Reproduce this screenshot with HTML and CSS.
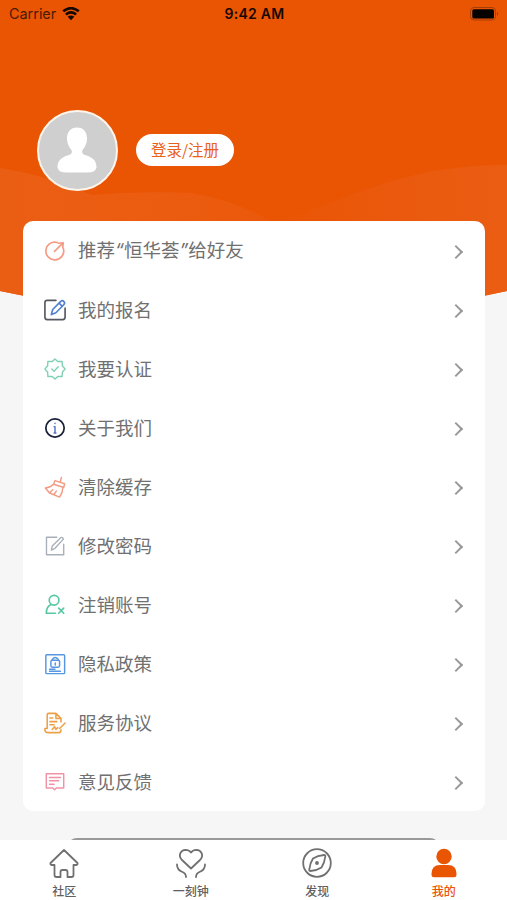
FILE: index.html
```html
<!DOCTYPE html>
<html lang="zh-CN">
<head>
<meta charset="utf-8">
<title>我的</title>
<link rel="stylesheet" href="styles.css">
</head>
<body>
<div class="app">
  <main class="page">
    <svg class="hero" viewBox="0 0 507 310" aria-hidden="true">
      <defs>
        <linearGradient id="left" x1="0" y1="0" x2="1" y2="0"><stop offset="0" stop-color="#ea5e14"/><stop offset=".6" stop-color="#ec5c10"/><stop offset="1" stop-color="#ea590b"/></linearGradient>
        <linearGradient id="right" x1="0" y1="0" x2="1" y2="0"><stop offset="0" stop-color="#ea5504"/><stop offset=".5" stop-color="#ea590d"/><stop offset="1" stop-color="#ea5d13"/></linearGradient>
      </defs>
      <path d="M0 0H507V291Q254 345 0 291Z" fill="#ea5504"/>
      <path d="M275 222C350 200 400 165 507 165V291Q400 316 275 316Z" fill="url(#right)"/>
      <path d="M0 168Q50 176 92 195Q140 191 190 193Q235 200 272 222V310H260Q110 315 0 291Z" fill="url(#left)"/>
    </svg>
    <header class="status">
      <div class="carrier">Carrier
        <svg width="18" height="14" viewBox="0 0 18 14"><path d="M1.200 4.300Q9-2 16.800 4.300M3.900 7.500Q9 3.300 14.100 7.500" fill="none" stroke="#160800" stroke-width="2.600"/><path d="M5.700 9.800Q9 7.100 12.300 9.800L9 13.300Z" fill="#160800"/></svg>
      </div>
      <div class="time">9:42 AM</div>
      <div class="battery"><svg width="30" height="14" viewBox="0 0 30 14"><rect x=".5" y=".5" width="25" height="12.500" rx="3.500" fill="none" stroke="#a63e08"/><rect x="2.300" y="2.200" width="21.700" height="9.300" rx="1.600" fill="#050200"/><path d="M27 4.500Q29.500 6.800 27 9Z" fill="#a63e08"/></svg></div>
    </header>
    <section class="profile">
      <div class="avatar"><svg width="76" height="76" viewBox="0 0 76 76"><path d="M38 15.500C31.500 15.500 28 20 28 26.500C28 31.500 30 35 32.500 38Q34 41.500 30 43C23 45 18.500 48.500 18.500 55Q18.500 60.500 28 60.500H48Q57.500 60.500 57.500 55C57.500 48.500 53 45 46 43Q42 41.500 43.500 38C46 35 48 31.500 48 26.500C48 20 44.500 15.500 38 15.500Z" fill="#fff"/></svg></div>
      <a class="login">登录/注册</a>
    </section>
    <ul class="menu">
      <li><svg class="icon" viewBox="0 0 24 24" stroke="#f59a83" stroke-width="1.800"><path d="M14.500 2.700A9.700 9.700 0 1 0 21 9M11.500 12.500L20 4M15.500 3.500L21 3L20.500 8.500"/></svg><span>推荐<q>“</q>恒华荟<q>”</q>给好友</span><i></i></li>
      <li><svg class="icon" viewBox="0 0 24 24" stroke="#55585e" stroke-width="1.800"><path d="M13 1.500H3.500Q1 1.500 1 4V20Q1 22.500 3.500 22.500H20.500Q23 22.500 23 20V10"/><path stroke="#5280cf" d="M8 17L9.500 11.500L18 2.800Q20 1 21.700 2.800Q23.300 4.500 21.500 6.300L13 15ZM16.500 4.500L20 8"/></svg><span>我的报名</span><i></i></li>
      <li><svg class="icon" viewBox="0 0 24 24" stroke="#80d1b4" stroke-width="1.500"><path d="M12 1L15 3.800L19.800 3.800L20 8.500L23 12L20 15.500L19.800 20.200L15 20.200L12 23L9 20.200L4.200 20.200L4 15.500L1 12L4 8.500L4.200 3.800L9 3.800ZM8.500 12L11 14.500L15.500 9.500"/></svg><span>我要认证</span><i></i></li>
      <li><svg class="icon" viewBox="0 0 24 24" stroke="#17213a" stroke-width="1.900"><circle cx="12" cy="12" r="10"/><path stroke="#5272d0" stroke-width="1.600" d="M12 10.500V17.500M12 6.800V7.200M11 10.500H12M11 17.500H13"/></svg><span>关于我们</span><i></i></li>
      <li><svg class="icon" viewBox="0 0 24 24" stroke="#f39b85" stroke-width="1.600"><path d="M19 1.500L17.800 6.500M12 5L22.500 8.500L21.500 12.500L10.500 9ZM10.500 9Q7 12.500 1.500 13L6 18.500L17 23Q20.500 18 20.500 12.500M6 18.500L9.500 15M10.500 20.500L13.500 16.500"/></svg><span>清除缓存</span><i></i></li>
      <li><svg class="icon" viewBox="0 0 24 24" stroke="#a9afb9" stroke-width="1.500"><path d="M14 2.500H2.700V21.500H21.500V10M8 16.500L9 12L18.500 2.800Q19.500 2.300 20.500 3.300L21.200 4.500L12 14.500Z"/></svg><span>修改密码</span><i></i></li>
      <li><svg class="icon" viewBox="0 0 24 24" stroke="#56c9a0" stroke-width="1.800"><circle cx="11" cy="6.800" r="5.300"/><path d="M8 11.500Q2.500 13.500 2.500 21H12.500M16 15.500L21.500 21M21.500 15.500L16 21"/></svg><span>注销账号</span><i></i></li>
      <li><svg class="icon" viewBox="0 0 24 24" stroke="#5797e2" stroke-width="1.600"><rect x="2" y="2" width="20.500" height="20.500" rx="1"/><rect x="7.500" y="8" width="9.500" height="7.500" rx="1.500"/><path d="M9 8V7Q12.300 3 15.500 7V8M12.300 11V13M6 17.800H12M6 20H18"/></svg><span>隐私政策</span><i></i></li>
      <li><svg class="icon" viewBox="0 0 24 24" stroke="#eda047" stroke-width="1.700"><path d="M3.500 18V3Q3.500 1.500 5 1.500H13L18.500 7V11M13 1.500V7H18.500M3.500 18H1V20Q1.500 22.500 4.500 22.500H16Q18.500 22.500 18.500 19.500M6.500 6.500H9.500M6.500 10.500H14M6.500 14H11M9 19L11.500 16L13 19L15 17M17 18L23 12"/></svg><span>服务协议</span><i></i></li>
      <li><svg class="icon" viewBox="0 0 24 24" stroke="#f193a6" stroke-width="1.600"><path d="M2.500 3H21.500V18.500H13.500L11.500 20.500L9.500 18.500H2.500ZM6 7H18M6 10.700H16M6 14.400H11"/></svg><span>意见反馈</span><i></i></li>
    </ul>
    <div class="sheet"></div>
  </main>
  <nav class="tabs">
    <a><svg viewBox="0 0 30 30"><path d="M15 2L1.500 15Q1 17 3 17H5.500V27Q5.500 29 7.500 29H11.500V24Q11.500 22 13.500 22H16.500Q18.500 22 18.500 24V29H22.500Q24.500 29 24.500 27V17H27Q29 17 28.500 15Z"/></svg>社区</a>
    <a><svg viewBox="0 0 30 30"><path d="M15 20.500L6 12C1.500 7 5 2 9.500 1.800Q13 1.800 15 4.500Q17 1.800 20.500 1.800C25 2 28.500 7 24 12ZM1 16.500Q1 22 6.500 24Q10 25.500 10 29M29 16.500Q29 22 23.500 24Q20 25.500 20 29"/></svg>一刻钟</a>
    <a><svg viewBox="0 0 30 30"><circle cx="15" cy="15" r="13.800"/><path d="M22 7Q23.500 7 23.300 8.500Q22.500 15 19.500 19.500Q15 22.500 8.500 23Q7 23 7.300 21.500Q8 15 11 10.500Q15.500 7.500 22 7Z"/><circle cx="15" cy="15" r="1" fill="#707070"/></svg>发现</a>
    <a class="active"><svg viewBox="0 0 30 30"><circle cx="15" cy="8.500" r="7.700"/><path d="M2.500 26Q2.500 17 11 17H19Q27.500 17 27.500 26V27Q27.500 29.300 25 29.300H5Q2.500 29.300 2.500 27Z"/></svg>我的</a>
  </nav>
</div>
</body>
</html>
```
FILE: styles.css
```css
* { box-sizing: border-box; }
body { margin: 0; font-family: "Noto Sans CJK SC", sans-serif; }
svg { display: block; flex: none; }
.app { width: 507px; height: 900px; display: flex; flex-direction: column; overflow: hidden; }
.page { position: relative; isolation: isolate; height: 840px; background: #f6f6f6; overflow: hidden; }
.hero { position: absolute; z-index: -1; top: 0; left: 0; width: 507px; height: 310px; }
.status { display: grid; grid-template-columns: 1fr auto 1fr; align-items: center; height: 27px; padding: 0 7px 0 9px; font-family: Inter, sans-serif; font-size: 14.4px; color: #160800; }
.carrier { display: flex; align-items: center; gap: 6px; color: #4a1a02; }
.time { font-weight: 600; font-size: 14px; letter-spacing: .25px; }
.battery { display: flex; justify-content: flex-end; }
.profile { display: flex; align-items: center; gap: 18px; height: 82px; margin: 82px 0 30px 37px; }
.avatar { width: 81px; height: 81px; border: 2.5px solid #fff4ea; border-radius: 50%; background: #cfcfcf; overflow: hidden; }
.login { width: 98px; height: 32px; border-radius: 16px; background: #fff; color: #e9611b; font-size: 15.5px; line-height: 31px; text-align: center; }
.menu { width: 462px; height: 590px; margin: 0 0 0 23px; padding: 0; list-style: none; background: #fff; border-radius: 10px; }
.menu li { display: flex; align-items: center; height: 59px; padding: 0 24px 0 21px; color: #707070; font-size: 18.5px; }
.menu span { margin: -1px 0 1px 12px; line-height: 28px; }
.menu q { quotes: none; font-family: Inter, sans-serif; font-style: italic; }
.menu i { width: 10px; height: 10px; margin: 3px 0 0 auto; border: solid #999; border-width: 2.8px 2.8px 0 0; transform: rotate(45deg); }
.icon { width: 22px; height: 22px; fill: none; stroke-linejoin: round; stroke-linecap: round; }
.sheet { height: 44px; margin: 27px 67px 0; border-radius: 10px; background: #999; }
.tabs { display: grid; grid-template-columns: repeat(4, 1fr); height: 60px; padding-left: 1px; background: #fff; }
.tabs a { display: flex; flex-direction: column; align-items: center; padding-top: 8px; color: #606060; font-size: 12px; font-weight: 500; line-height: 26px; }
.tabs svg { width: 30px; height: 30px; fill: none; stroke: #707070; stroke-width: 1.8; stroke-linejoin: round; stroke-linecap: round; }
.tabs .active { color: #ea5504; }
.tabs .active svg { fill: #ea5504; stroke: none; }
```
